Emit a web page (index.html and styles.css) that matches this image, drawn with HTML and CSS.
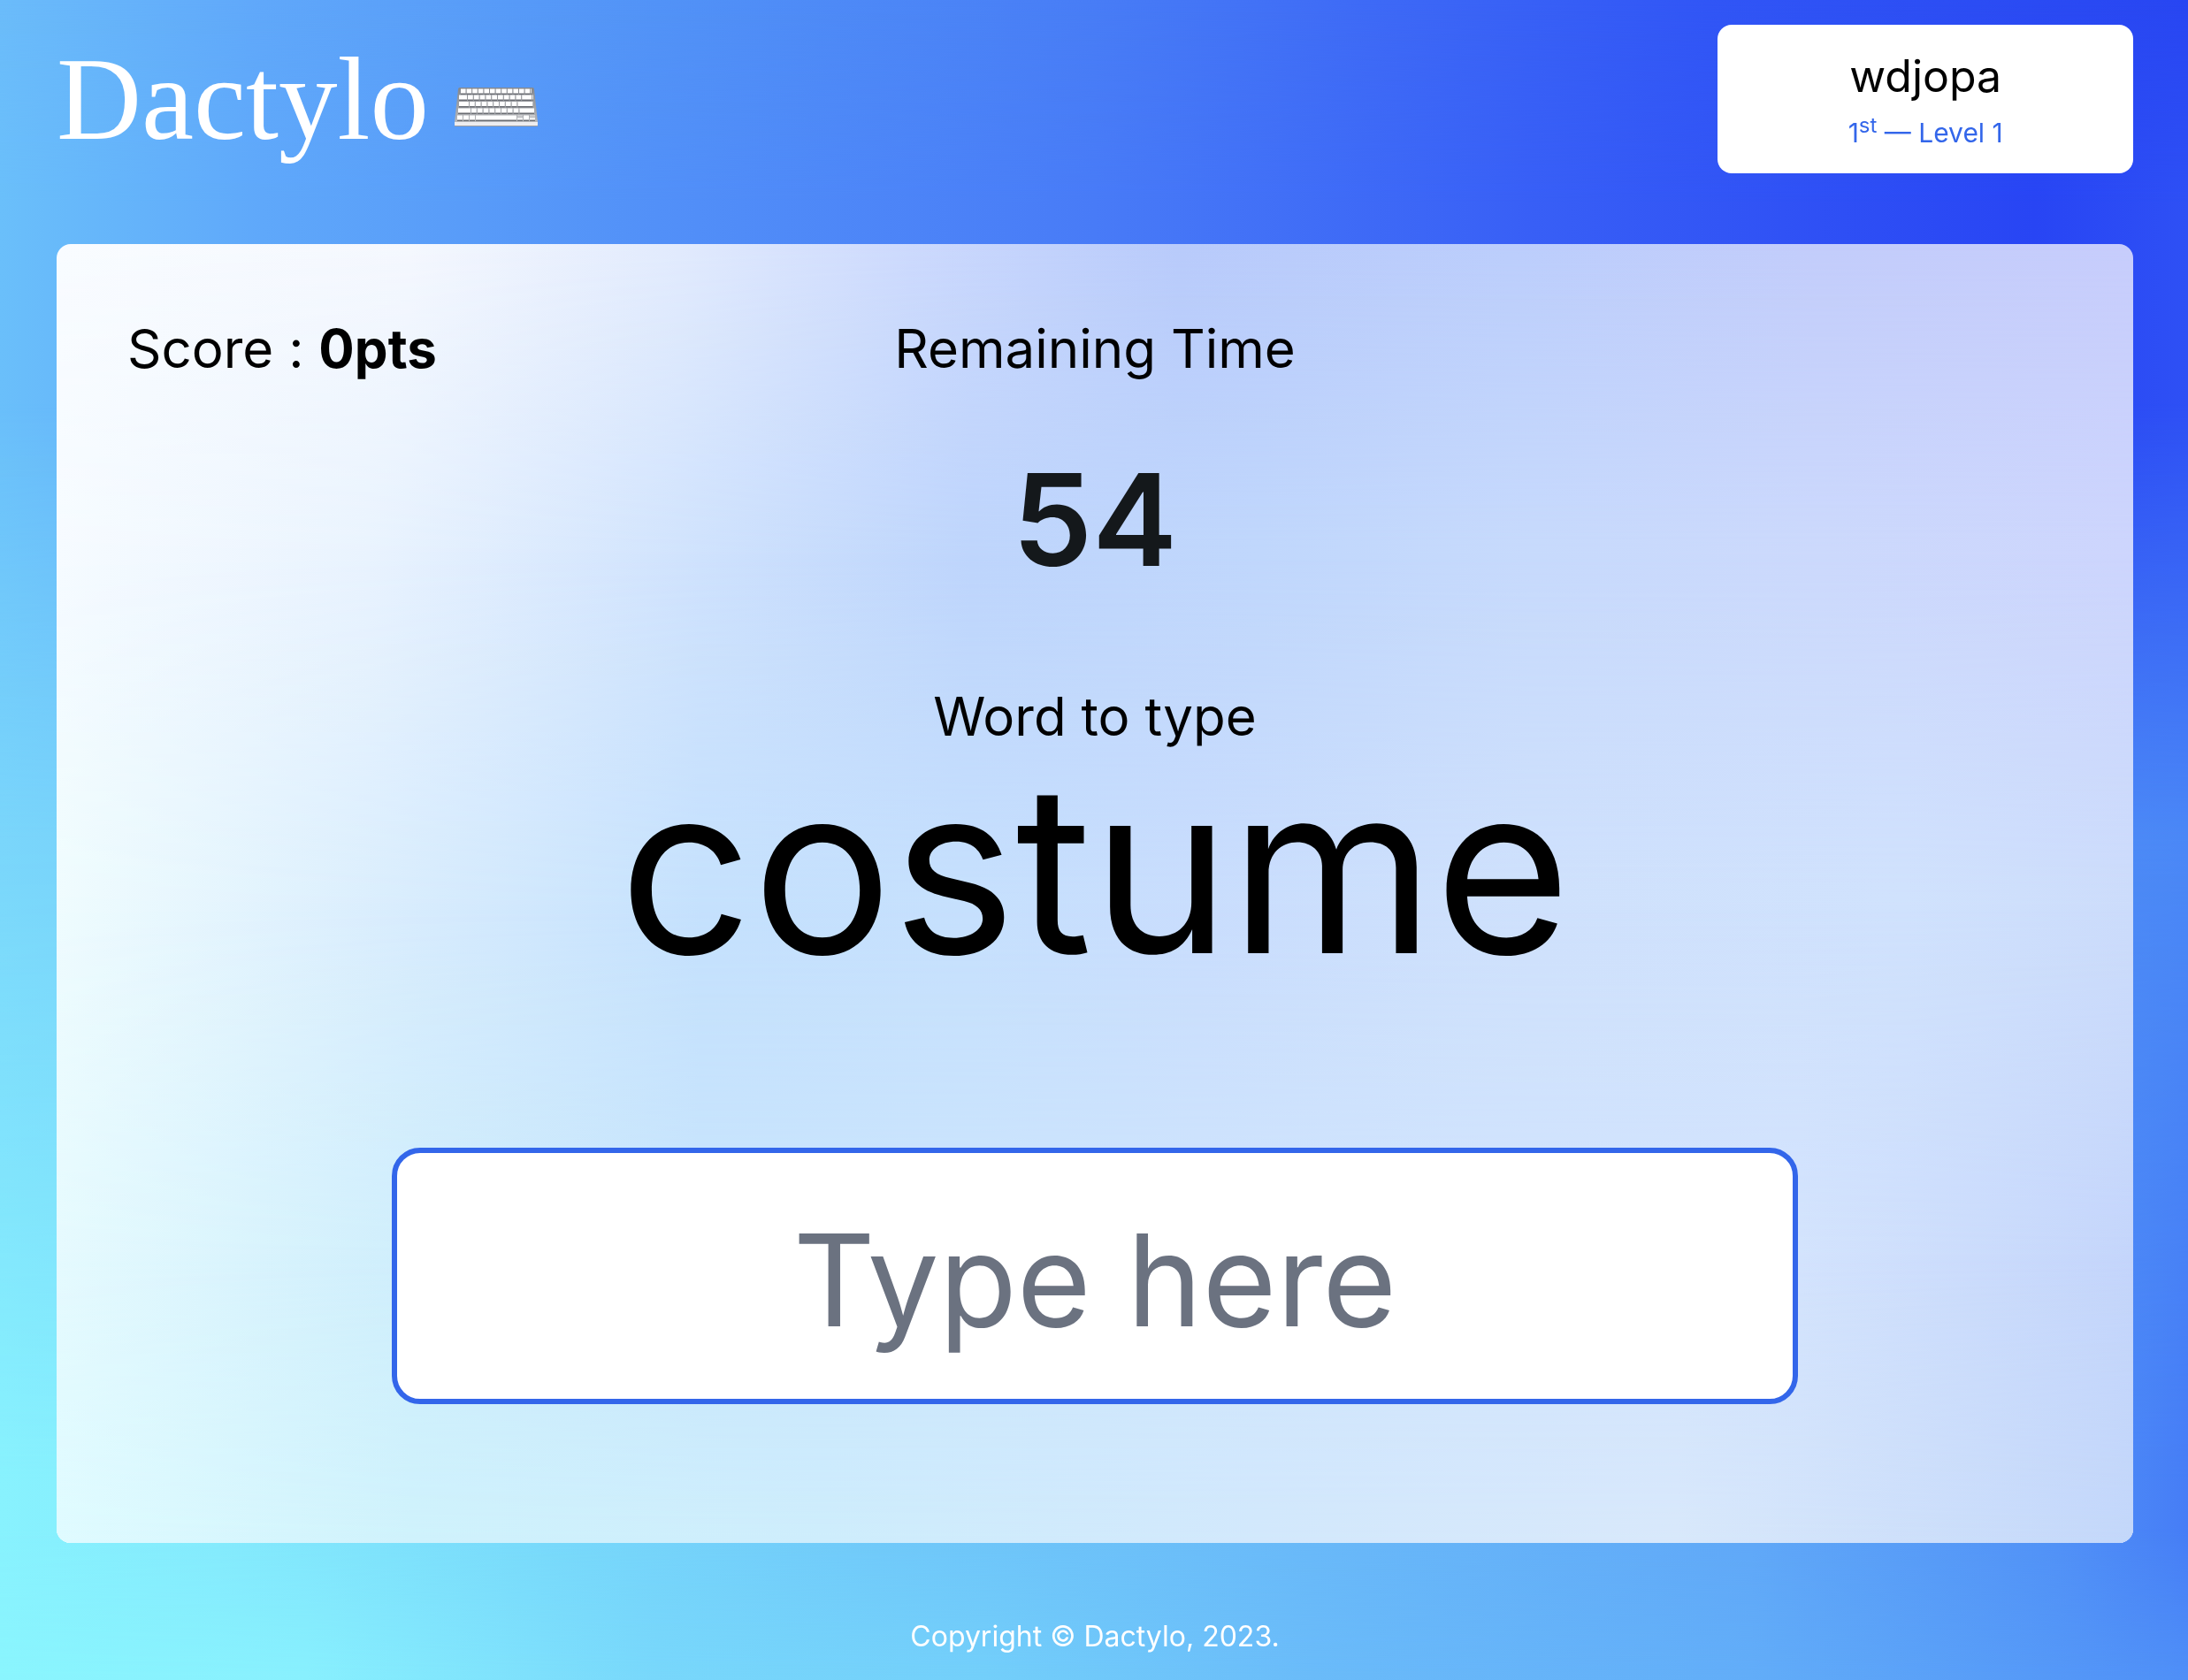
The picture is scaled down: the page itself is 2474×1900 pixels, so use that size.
FILE: index.html
```html
<!DOCTYPE html>
<html lang="en">
<head>
<meta charset="utf-8">
<meta name="viewport" content="width=device-width, initial-scale=1">
<title>Dactylo</title>
<link rel="stylesheet" href="styles.css">
</head>
<body>
<svg class="backdrop" viewBox="0 0 100 100" preserveAspectRatio="none" aria-hidden="true">
  <defs>
    <linearGradient id="pageTop">
      <stop offset="0" stop-color="#6bbcfa"/><stop offset=".12" stop-color="#60a8fa"/><stop offset=".3" stop-color="#5293f7"/><stop offset=".5" stop-color="#487df6"/><stop offset=".64" stop-color="#3d68f6"/><stop offset=".78" stop-color="#3156f6"/><stop offset="1" stop-color="#2846f2"/>
    </linearGradient>
    <linearGradient id="pageUpper">
      <stop offset="0" stop-color="#6abffa"/><stop offset=".12" stop-color="#5fa8fa"/><stop offset=".3" stop-color="#5290f8"/><stop offset=".5" stop-color="#487bf7"/><stop offset=".7" stop-color="#385ff6"/><stop offset=".93" stop-color="#2845f4"/><stop offset="1" stop-color="#2e50f5"/>
    </linearGradient>
    <linearGradient id="pageMid">
      <stop offset="0" stop-color="#7ad6fb"/><stop offset="1" stop-color="#4b88f6"/>
    </linearGradient>
    <linearGradient id="pageLower">
      <stop offset="0" stop-color="#88f2fe"/><stop offset=".1" stop-color="#84eafd"/><stop offset=".25" stop-color="#78d9fb"/><stop offset=".4" stop-color="#70c9fa"/><stop offset=".6" stop-color="#69b9f9"/><stop offset=".8" stop-color="#60a8f8"/><stop offset=".94" stop-color="#5191f7"/><stop offset="1" stop-color="#467df6"/>
    </linearGradient>
    <linearGradient id="pageBottom">
      <stop offset="0" stop-color="#8af5fe"/><stop offset=".14" stop-color="#88f0fe"/><stop offset=".3" stop-color="#78d7fb"/><stop offset=".45" stop-color="#73cffa"/><stop offset=".6" stop-color="#6abbf9"/><stop offset=".8" stop-color="#62adf8"/><stop offset="1" stop-color="#4f8ff7"/>
    </linearGradient>
    <linearGradient id="fade" x1="0" y1="0" x2="0" y2="1">
      <stop offset="0" stop-color="#fff" stop-opacity="0"/><stop offset="1" stop-color="#fff"/>
    </linearGradient>
    <mask id="pageFade1" maskUnits="userSpaceOnUse" x="0" y="0" width="100" height="100"><rect width="100" height="12.1" fill="url(#fade)"/><rect y="12" width="100" height="88" fill="#fff"/></mask>
    <mask id="pageFade2" maskUnits="userSpaceOnUse" x="0" y="0" width="100" height="100"><rect y="24" width="100" height="26.1" fill="url(#fade)"/><rect y="50" width="100" height="50" fill="#fff"/></mask>
    <mask id="pageFade3" maskUnits="userSpaceOnUse" x="0" y="0" width="100" height="100"><rect y="50" width="100" height="38.1" fill="url(#fade)"/><rect y="88" width="100" height="12" fill="#fff"/></mask>
    <mask id="pageFade4" maskUnits="userSpaceOnUse" x="0" y="0" width="100" height="100"><rect y="91" width="100" height="9" fill="url(#fade)"/></mask>
  </defs>
  <rect width="100" height="100" fill="url(#pageTop)"/>
  <rect width="100" height="100" fill="url(#pageUpper)" mask="url(#pageFade1)"/>
  <rect width="100" height="100" fill="url(#pageMid)" mask="url(#pageFade2)"/>
  <rect width="100" height="100" fill="url(#pageLower)" mask="url(#pageFade3)"/>
  <rect width="100" height="100" fill="url(#pageBottom)" mask="url(#pageFade4)"/>
</svg>

<div class="page">
  <header class="header">
    <h1 class="logo">
      <span>Dactylo</span>
      <svg class="logo-icon" viewBox="0 0 96 46" aria-hidden="true">
        <defs><linearGradient id="caseFill" x1="0" y1="0" x2="0" y2="1"><stop offset="0" stop-color="#85888e"/><stop offset="1" stop-color="#bcbdc0"/></linearGradient></defs>
        <path d="M7 1H89Q91 1 91 3L95 40V43Q95 45 93 45H3Q1 45 1 43V40L5 3Q5 1 7 1Z" fill="url(#caseFill)"/>
        <path d="M1 40H95V43Q95 45 93 45H3Q1 45 1 43Z" fill="#ededf0"/>
        <path d="M1 44.500H95" stroke="#9b9da3"/>
        <g fill="none" stroke="#6a6d73" stroke-width="5">
          <path d="M8 6.500H88" stroke-dasharray="5.600 1"/>
          <path d="M6 13.500H90" stroke-dasharray="9 1 5.800 1 5.800 1 5.800 1 5.800 1 5.800 1 5.800 1 5.800 1 5.800 1 5.800 1 11 1"/>
          <path d="M6 21H90" stroke-dasharray="11 1 5.800 1 5.800 1 5.800 1 5.800 1 5.800 1 5.800 1 5.800 1 5.800 1 17 1"/>
          <path d="M5 28.500H91" stroke-dasharray="14 1 5.800 1 5.800 1 5.800 1 5.800 1 5.800 1 5.800 1 5.800 1 5.800 1 17 1"/>
          <path d="M4 36.500H92" stroke-dasharray="6 1 6 1 6 1 46 1 6 1 6 1 6 1"/>
        </g>
        <g fill="none" stroke="#fff" stroke-width="5">
          <path d="M8 5H88" stroke-dasharray="5.600 1"/>
          <path d="M6 12H90" stroke-dasharray="9 1 5.800 1 5.800 1 5.800 1 5.800 1 5.800 1 5.800 1 5.800 1 5.800 1 5.800 1 11 1"/>
          <path d="M6 19.500H90" stroke-dasharray="11 1 5.800 1 5.800 1 5.800 1 5.800 1 5.800 1 5.800 1 5.800 1 5.800 1 17 1"/>
          <path d="M5 27H91" stroke-dasharray="14 1 5.800 1 5.800 1 5.800 1 5.800 1 5.800 1 5.800 1 5.800 1 5.800 1 17 1"/>
          <path d="M4 35H92" stroke-dasharray="6 1 6 1 6 1 46 1 6 1 6 1 6 1"/>
        </g>
        <path d="M72 34H78M86 34H92" stroke="#c4c5c8" stroke-width="3"/>
      </svg>
    </h1>
    <div class="player">
      <p class="player-name">wdjopa</p>
      <p class="player-rank">1<sup>st</sup> — Level 1</p>
    </div>
  </header>

  <main class="board">
    <svg class="board-tint" viewBox="0 0 100 100" preserveAspectRatio="none" aria-hidden="true">
      <defs>
        <linearGradient id="row1"><stop offset="0" stop-color="#f9fcff"/><stop offset=".17" stop-color="#f5f8fe"/><stop offset=".3" stop-color="#e2ebfd"/><stop offset=".41" stop-color="#cddafd"/><stop offset=".54" stop-color="#b9cbfb"/><stop offset=".7" stop-color="#bccefc"/><stop offset=".85" stop-color="#c3cdfb"/><stop offset="1" stop-color="#c7cdfc"/></linearGradient>
        <linearGradient id="row2"><stop offset="0" stop-color="#f6fbff"/><stop offset=".15" stop-color="#e9f3fe"/><stop offset=".31" stop-color="#cfe2fd"/><stop offset=".44" stop-color="#bed5fc"/><stop offset=".58" stop-color="#c0d7fc"/><stop offset=".71" stop-color="#c7dafc"/><stop offset=".85" stop-color="#ccd9fc"/><stop offset="1" stop-color="#cdd5fd"/></linearGradient>
        <linearGradient id="row3"><stop offset="0" stop-color="#effcfe"/><stop offset=".17" stop-color="#d8ecfd"/><stop offset=".31" stop-color="#c5e1fd"/><stop offset=".44" stop-color="#c6e0fd"/><stop offset=".55" stop-color="#c9ddfd"/><stop offset=".71" stop-color="#cfe1fc"/><stop offset=".89" stop-color="#d0e2fd"/><stop offset="1" stop-color="#ccdcfb"/></linearGradient>
        <linearGradient id="row4"><stop offset="0" stop-color="#e5fafe"/><stop offset=".17" stop-color="#cfeefc"/><stop offset=".31" stop-color="#c8e5fd"/><stop offset=".55" stop-color="#cfe5fd"/><stop offset=".84" stop-color="#d3e3fd"/><stop offset="1" stop-color="#c4d5fb"/></linearGradient>
        <linearGradient id="row5"><stop offset="0" stop-color="#dffbff"/><stop offset=".17" stop-color="#cff2fc"/><stop offset=".37" stop-color="#ceedfc"/><stop offset=".58" stop-color="#d2e8fc"/><stop offset=".78" stop-color="#d8e8fb"/><stop offset="1" stop-color="#c3d7fa"/></linearGradient>
        <mask id="boardFade1" maskUnits="userSpaceOnUse" x="0" y="0" width="100" height="100"><rect width="100" height="24.100" fill="url(#fade)"/><rect y="24" width="100" height="76" fill="#fff"/></mask>
        <mask id="boardFade2" maskUnits="userSpaceOnUse" x="0" y="0" width="100" height="100"><rect y="24" width="100" height="27.100" fill="url(#fade)"/><rect y="51" width="100" height="49" fill="#fff"/></mask>
        <mask id="boardFade3" maskUnits="userSpaceOnUse" x="0" y="0" width="100" height="100"><rect y="51" width="100" height="27.100" fill="url(#fade)"/><rect y="78" width="100" height="22" fill="#fff"/></mask>
        <mask id="boardFade4" maskUnits="userSpaceOnUse" x="0" y="0" width="100" height="100"><rect y="78" width="100" height="22" fill="url(#fade)"/></mask>
      </defs>
      <rect width="100" height="100" fill="url(#row1)"/>
      <rect width="100" height="100" fill="url(#row2)" mask="url(#boardFade1)"/>
      <rect width="100" height="100" fill="url(#row3)" mask="url(#boardFade2)"/>
      <rect width="100" height="100" fill="url(#row4)" mask="url(#boardFade3)"/>
      <rect width="100" height="100" fill="url(#row5)" mask="url(#boardFade4)"/>
    </svg>
    <div class="status">
      <p class="label">Score : <strong>0pts</strong></p>
      <div class="timer">
        <p class="label">Remaining Time</p>
        <p class="time">54</p>
      </div>
    </div>
    <label class="label" for="answer">Word to type</label>
    <p class="word">costume</p>
    <input class="answer" id="answer" type="text" placeholder="Type here" autocomplete="off">
  </main>

  <footer class="footer">Copyright © Dactylo, 2023.</footer>
</div>
</body>
</html>
```
FILE: styles.css
```css
* {
  box-sizing: border-box;
}

body {
  margin: 0;
  background: #6bb4f9;
  color: #000;
  font-family: Inter, "Liberation Sans", sans-serif;
}

h1,
p {
  margin: 0;
  font-weight: 400;
}

.backdrop {
  position: fixed;
  inset: 0;
  z-index: -1;
  width: 100%;
  height: 100%;
}

.page {
  display: flex;
  flex-direction: column;
  min-height: 100vh;
  padding: 28px 62px 24px 64px;
}

.header {
  display: flex;
  align-items: center;
  justify-content: space-between;
  margin-bottom: 80px;
}

.logo {
  display: flex;
  align-items: center;
  gap: 28px;
  color: #fff;
  font-family: "Liberation Serif", serif;
  font-size: 133px;
  line-height: 168px;
}

.logo-icon {
  width: 96px;
  height: 46px;
  margin-top: 18px;
}

.player {
  width: 20%;
  height: 168px;
  padding-top: 26px;
  border-radius: 16px;
  background: #fff;
  text-align: center;
}

.player-name {
  font-size: 50px;
  line-height: 64px;
}

.player-rank {
  color: #3366ea;
  font-size: 30px;
  line-height: 64px;
}

.player-rank sup {
  font-size: 24px;
  line-height: 0;
}

.board {
  position: relative;
  display: flex;
  flex: 1;
  flex-direction: column;
  align-items: center;
  overflow: hidden;
  padding: 78px 80px;
  border-radius: 16px;
}

.board-tint {
  position: absolute;
  inset: 0;
  z-index: -1;
  width: 100%;
  height: 100%;
}

.status {
  display: grid;
  grid-template-columns: 1fr auto 1fr;
  width: 100%;
  margin-bottom: 98px;
}

.timer {
  text-align: center;
}

.label {
  font-size: 60px;
  line-height: 80px;
}

.time {
  margin-top: 70px;
  color: #14181b;
  font-size: 144px;
  font-weight: 600;
  line-height: 168px;
}

.word {
  font-size: 264px;
  line-height: 264px;
}

.answer {
  width: 1590px;
  max-width: 100%;
  height: 290px;
  margin-top: 184px;
  padding: 8px 32px 0;
  border: 6px solid #3366ea;
  border-radius: 32px;
  outline: 0;
  background: #fff;
  color: #000;
  font: 400 144px Inter, "Liberation Sans", sans-serif;
  text-align: center;
}

.answer::placeholder {
  color: #6b7280;
  opacity: 1;
}

.footer {
  padding-top: 80px;
  color: #fff;
  font-size: 32px;
  line-height: 51px;
  text-align: center;
}
```
